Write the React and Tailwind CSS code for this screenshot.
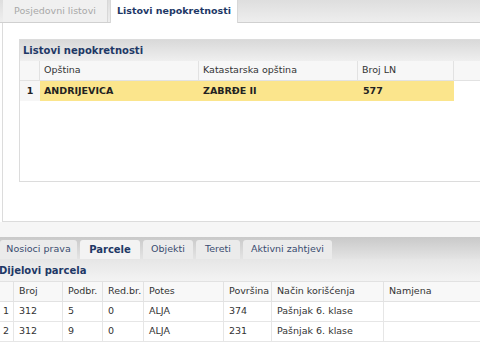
const topCols = [
  { label: "Opština", w: "w-[159px]" },
  { label: "Katastarska opština", w: "w-[159px]" },
  { label: "Broj LN", w: "w-[96px]" },
];

const bottomCols = [
  { label: "Broj", w: "w-[49px]" },
  { label: "Podbr.", w: "w-[40px]" },
  { label: "Red.br.", w: "w-[41px]" },
  { label: "Potes", w: "w-[80px]" },
  { label: "Površina", w: "w-[48px]" },
  { label: "Način korišćenja", w: "w-[112px]" },
  { label: "Namjena", w: "w-[120px]" },
];

const parcels = [
  ["312", "5", "0", "ALJA", "374", "Pašnjak 6. klase", ""],
  ["312", "9", "0", "ALJA", "231", "Pašnjak 6. klase", ""],
];

const bottomTabs = [
  { label: "Nosioci prava", w: "w-[77px]" },
  { label: "Parcele", w: "w-[60px]", active: true },
  { label: "Objekti", w: "w-[50px]" },
  { label: "Tereti", w: "w-[44px]" },
  { label: "Aktivni zahtjevi", w: "w-[89px]" },
];

export default function App() {
  return (
    <div
      className="w-[480px] h-[360px] overflow-hidden bg-white text-[9.5px] text-[#333]"
      style={{ fontFamily: '"DejaVu Sans", Verdana, sans-serif' }}
    >
      {/* top tabs */}
      <div className="flex items-end h-[23px] bg-gradient-to-b from-[#dedede] to-[#eeeeee] border-b border-[#d0d0d0] pl-[3px]">
        <div className="w-[105px] h-[22px] flex items-center justify-center bg-[#f0f0f0] border-r border-[#d8d8d8] text-[#a8a8a8]">
          Posjedovni listovi
        </div>
        <div className="w-[128px] h-[23px] -mb-px ml-[2px] flex items-center justify-center bg-white border-x border-[#d8d8d8] font-bold text-[#1e3866]">
          Listovi nepokretnosti
        </div>
      </div>

      {/* content panel */}
      <div className="ml-[2px] h-[199px] border-l border-b border-[#dcdcdc] pl-[16px] pt-[16px]">
        <div className="w-[520px] h-[143px] border border-[#dcdcdc]">
          <div className="h-[21px] flex items-center pl-[3px] bg-gradient-to-b from-[#d9d9d9] to-[#efefef] font-bold text-[#1e3866] text-[10px]">
            Listovi nepokretnosti
          </div>
          <div className="flex h-[20px] bg-[#f7f7f7] border-b border-[#e2e2e2]">
            <div className="w-[20px] shrink-0 border-r border-[#e2e2e2]" />
            {topCols.map((c) => (
              <div
                key={c.label}
                className={`${c.w} shrink-0 flex items-center pl-[4px] border-r border-[#e2e2e2]`}
              >
                {c.label}
              </div>
            ))}
          </div>
          <div className="flex h-[20px] font-bold text-[#222]">
            <div className="w-[20px] shrink-0 flex items-center justify-center bg-[#f6f6f6]">1</div>
            <div className="w-[414px] shrink-0 flex bg-[#fbe58c]">
              <div className="w-[159px] shrink-0 flex items-center pl-[4px]">ANDRIJEVICA</div>
              <div className="w-[159px] shrink-0 flex items-center pl-[4px]">ZABRĐE II</div>
              <div className="w-[96px] shrink-0 flex items-center pl-[5px]">577</div>
            </div>
          </div>
        </div>
      </div>

      <div className="h-[15px] bg-[#f6f6f6]" />

      {/* bottom tabs */}
      <div className="flex items-end gap-[3px] h-[22px] bg-gradient-to-b from-[#c9c9c9] to-[#e4e4e4]">
        {bottomTabs.map((t) => (
          <div
            key={t.label}
            className={`${t.w} shrink-0 h-[19px] flex items-center justify-center rounded-t-[3px] ${
              t.active
                ? "bg-[#f3f3f3] font-bold text-[#1e3866] text-[10px]"
                : "bg-[#ebebeb] text-[#3a4c70]"
            }`}
          >
            {t.label}
          </div>
        ))}
      </div>

      <div className="h-[22px] flex items-center -ml-[1px] bg-gradient-to-b from-[#e6e6e6] to-[#f3f3f3] font-bold text-[#1e3866] text-[10px]">
        Dijelovi parcela
      </div>

      <div className="flex h-[21px] bg-[#f8f8f8] border-y border-[#e2e2e2]">
        <div className="w-[14px] shrink-0 border-r border-[#e2e2e2]" />
        {bottomCols.map((c) => (
          <div key={c.label} className={`${c.w} shrink-0 flex items-center pl-[5px] border-r border-[#e2e2e2]`}>
            {c.label}
          </div>
        ))}
      </div>
      {parcels.map((row, i) => (
        <div key={i} className="flex h-[20px] border-b border-[#e6e6e6]">
          <div className="w-[14px] shrink-0 flex items-center pl-[3px] border-r border-[#e6e6e6]">{i + 1}</div>
          {row.map((v, j) => (
            <div
              key={j}
              className={`${bottomCols[j].w} shrink-0 flex items-center pl-[5px] border-r border-[#e6e6e6]`}
            >
              {v}
            </div>
          ))}
        </div>
      ))}
    </div>
  );
}
